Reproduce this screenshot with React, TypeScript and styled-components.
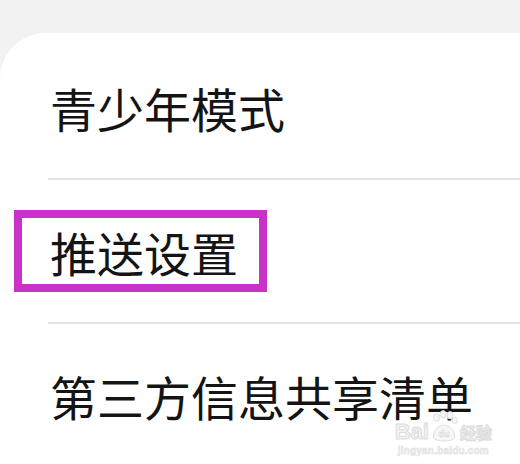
import React from "react";
import styled, { createGlobalStyle } from "styled-components";

const Global = createGlobalStyle`
  html, body {
    margin: 0;
    padding: 0;
    background: #f2f2f2;
    overflow: hidden;
  }
  body {
    font-family: "Noto Sans CJK SC", "Noto Sans", sans-serif;
  }
`;

const Page = styled.div`
  width: 520px;
  height: 464px;
  padding-top: 33px;
  box-sizing: border-box;
  position: relative;
  overflow: hidden;
`;

const Card = styled.div`
  background: #ffffff;
  border-top-left-radius: 46px;
  padding-top: 3px;
  height: 100%;
`;

const Row = styled.div<{ $divider?: boolean }>`
  height: 142px;
  display: flex;
  align-items: center;
  padding-left: 50px;
  position: relative;
  ${(p) =>
    p.$divider &&
    `
    margin-bottom: 2px;
    &::after {
      content: "";
      position: absolute;
      left: 48px;
      right: 0;
      bottom: -2px;
      height: 2px;
      background: #e3e3e3;
    }
  `}
`;

const Label = styled.span<{ $marked?: boolean }>`
  font-size: 47px;
  line-height: 47px;
  color: #141414;
  font-weight: 400;
  letter-spacing: 0;
  position: relative;
  ${(p) =>
    p.$marked &&
    `
    &::after {
      content: "";
      position: absolute;
      top: -18px;
      bottom: -17px;
      left: -36px;
      right: -29px;
      border: 8px solid #c932c9;
    }
  `}
`;

const Watermark = styled.div`
  position: absolute;
  right: 28px;
  bottom: 8px;
  display: flex;
  flex-direction: column;
  align-items: center;
  color: #f4f4f4;
  font-family: "Liberation Sans", Arial, sans-serif;
  pointer-events: none;
`;

const MarkTop = styled.div`
  display: flex;
  align-items: flex-end;
  font-size: 22px;
  font-weight: 700;
  line-height: 22px;
  -webkit-text-stroke: 1px #dcdcdc;
`;

const Paw = styled.svg`
  width: 28px;
  height: 34px;
  margin: 0 1px;
`;

const CnMark = styled.span`
  font-family: "Noto Sans CJK SC", sans-serif;
  font-size: 16px;
  margin-left: 1px;
`;

const MarkUrl = styled.div`
  font-size: 10px;
  font-weight: 700;
  color: #f0f0f0;
  -webkit-text-stroke: 0.5px #dedede;
  margin-top: 2px;
  letter-spacing: 0.2px;
`;

export default function App() {
  return (
    <>
      <Global />
      <Page>
        <Card>
          <Row $divider>
            <Label>青少年模式</Label>
          </Row>
          <Row $divider>
            <Label $marked>推送设置</Label>
          </Row>
          <Row>
            <Label>第三方信息共享清单</Label>
          </Row>
        </Card>
        <Watermark>
          <MarkTop>
            <span>Bai</span>
            <Paw viewBox="0 0 30 34">
              <g fill="#f6f6f6" stroke="#dcdcdc" strokeWidth="1">
                <ellipse cx="7" cy="8" rx="3.2" ry="4" />
                <ellipse cx="14" cy="4.5" rx="3.2" ry="4" />
                <ellipse cx="21.5" cy="5.5" rx="3.2" ry="4" />
                <ellipse cx="26.5" cy="11" rx="2.8" ry="3.6" />
                <path d="M4 30 C2 24 8 16 15 16 C22 16 28 24 26 30 C24 34 6 34 4 30 Z" />
              </g>
              <text x="15" y="29" fontSize="10" fontWeight="700" textAnchor="middle" fill="#f6f6f6" stroke="#d8d8d8" strokeWidth="0.6" fontFamily="Liberation Sans, sans-serif">du</text>
            </Paw>
            <CnMark>经验</CnMark>
          </MarkTop>
          <MarkUrl>jingyan.baidu.com</MarkUrl>
        </Watermark>
      </Page>
    </>
  );
}
